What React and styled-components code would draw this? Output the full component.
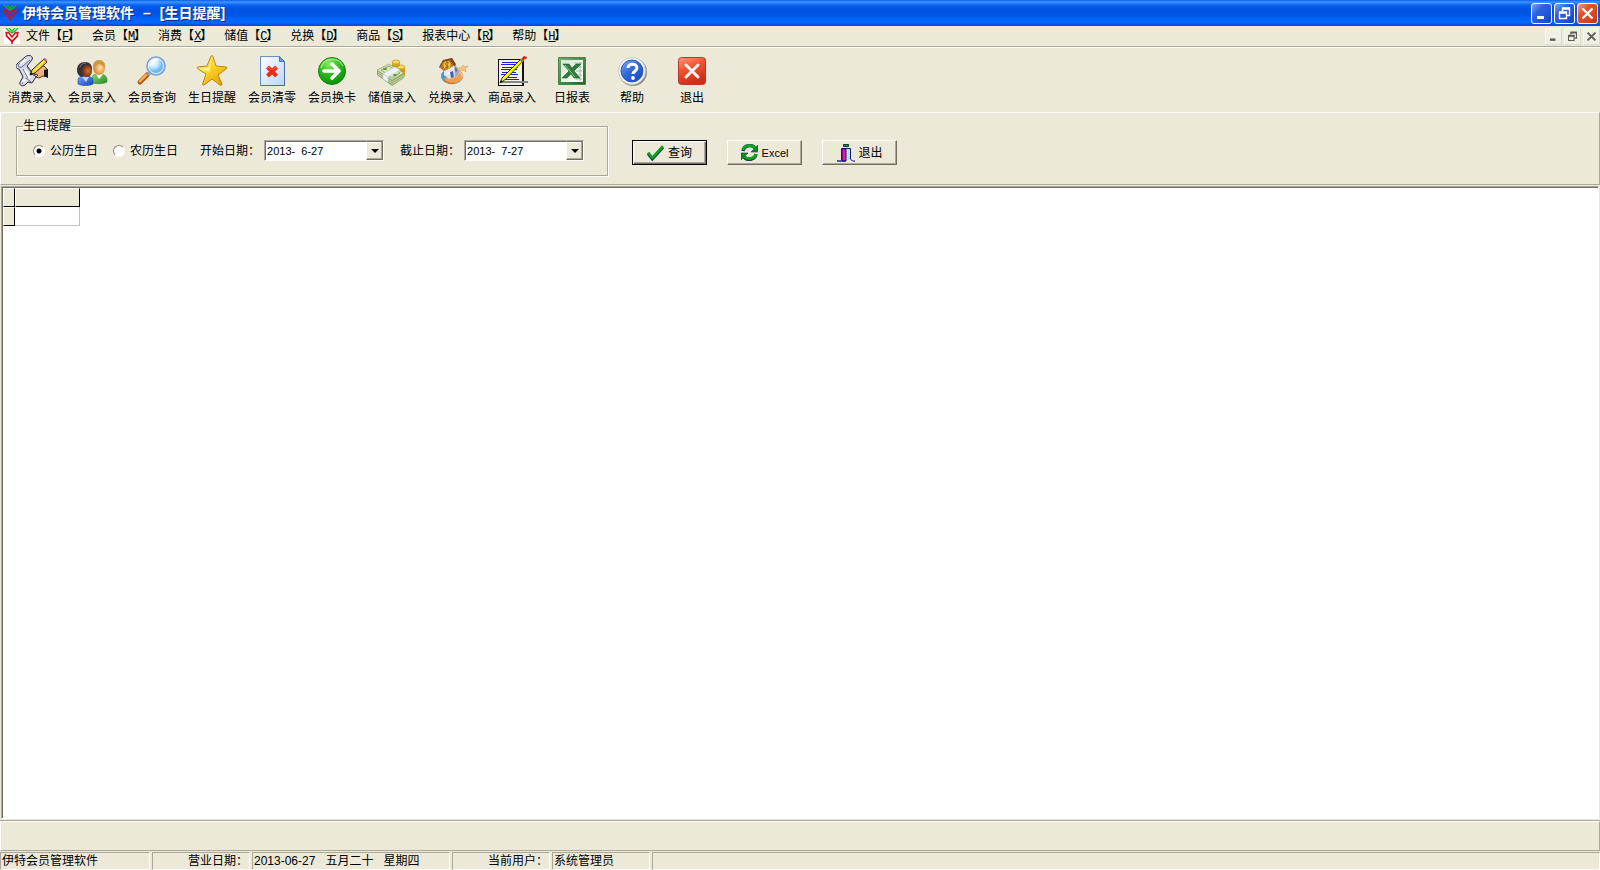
import React, { useState } from 'react';
import styled, { createGlobalStyle } from 'styled-components';

const FACE = '#ECE9D8';
const SHADOW = '#ACA899';
const DARK = '#716F64';

const GlobalStyle = createGlobalStyle`
    * {
        box-sizing: border-box;
    }

    body {
        margin: 0;
        background: ${FACE};
    }

    body, button, input {
        font-family: "Liberation Sans", "Noto Sans CJK SC", sans-serif;
        font-size: 12px;
        line-height: 16px;
        color: #000;
    }
`;

const AppWrapper = styled.div`
    display: flex;
    flex-direction: column;
    min-height: 100vh;
    background: ${FACE};
`;

const TitleBar = styled.header`
    display: flex;
    align-items: center;
    height: 26px;
    padding: 0 2px;
    background: linear-gradient(
        #0A5FE8 0px, #3D95FF 2px, #0B62EE 5px, #0054E3 9px,
        #0055E5 15px, #0066FF 20px, #0066FC 23px, #0043CF 26px
    );
`;

const Title = styled.h1`
    display: flex;
    gap: 9px;
    flex: auto;
    margin: 0;
    padding-left: 4px;
    font-size: 14px;
    line-height: 20px;
    font-weight: bold;
    color: #FFF;
    text-shadow: 1px 1px 0 #0A2A80;
`;

const WindowButtons = styled.div`
    display: flex;
    gap: 2px;
`;

const WindowButton = styled.button`
    width: 21px;
    height: 21px;
    padding: 0;
    border: 1px solid #FFF;
    border-radius: 3px;
    background: ${({ $close }) => ($close
        ? 'linear-gradient(135deg, #F0A088 0%, #E0502C 35%, #D8421C 75%, #B83010 100%)'
        : 'linear-gradient(135deg, #7FA4F0 0%, #2F62E0 35%, #1F50D8 75%, #1440B8 100%)')};

    svg {
        display: block;
    }
`;

const MenuBar = styled.nav`
    display: flex;
    align-items: center;
    height: 21px;
    padding-left: 4px;
    border-bottom: 1px solid ${SHADOW};
`;

const MenuIcon = styled.span`
    display: flex;
    width: 16px;
    height: 16px;
    background: #FFF;
`;

const MenuItem = styled.button`
    padding: 0 6px;
    border: 0;
    background: none;
    white-space: nowrap;
`;

const AccessKey = styled.u`
    display: inline-block;
    width: 6px;
    font-family: "Liberation Mono", monospace;
`;

const ChildButtons = styled.div`
    display: flex;
    gap: 2px;
    margin-left: auto;
`;

const ChildButton = styled.button`
    width: 17px;
    height: 17px;
    padding: 0;
    border: 1px solid #F8F6EE;
    border-right-color: #DEDACA;
    border-bottom-color: #DEDACA;
    background: #F1EFE4;

    svg {
        display: block;
    }
`;

const Toolbar = styled.div`
    display: flex;
    padding: 7px 2px 6px;
    border-top: 1px solid #FFF;
`;

const ToolButton = styled.button`
    display: flex;
    flex-direction: column;
    align-items: center;
    gap: 3px;
    width: 60px;
    padding: 0;
    border: 0;
    background: none;
    white-space: nowrap;
`;

const FilterPanel = styled.form`
    display: flex;
    align-items: flex-start;
    height: 73px;
    padding: 5px 0 0 15px;
    border: 1px solid #FFF;
    border-right-color: ${SHADOW};
    border-bottom-color: ${SHADOW};
`;

const Group = styled.fieldset`
    display: flex;
    align-items: center;
    margin: 0;
    padding: 6px 23px 14px 16px;
    border: 1px solid ${SHADOW};
    box-shadow: 1px 1px 0 #FFF, inset 1px 1px 0 #FFF;
`;

const Legend = styled.legend`
    margin-left: -10px;
    padding: 0;
`;

const RadioLabel = styled.label`
    display: flex;
    align-items: center;
    gap: 5px;
    margin-right: 15px;
`;

const Radio = styled.input`
    appearance: none;
    width: 12px;
    height: 12px;
    margin: 0;
    border: 1px solid;
    border-color: #8A8778 #FFF #FFF #8A8778;
    border-radius: 50%;
    background: #FFF;

    &:checked {
        background: radial-gradient(circle, #000 0 2px, #FFF 3px);
    }
`;

const FieldLabel = styled.label`
    width: 64px;
    margin-left: ${({ $first }) => ($first ? '7px' : '16px')};
    white-space: nowrap;
`;

const DateBox = styled.div`
    display: flex;
    width: 120px;
    height: 21px;
    border: 1px solid;
    border-color: ${SHADOW} #FFF #FFF ${SHADOW};
`;

const DateInput = styled.input`
    flex: auto;
    width: 0;
    padding: 0 0 0 1px;
    border: 1px solid ${DARK};
    border-width: 1px 0 0 1px;
    background: #FFF;
    font-size: 11px;
    outline: none;
`;

const DropButton = styled.button`
    flex: none;
    width: 17px;
    padding: 0;
    border: 1px solid;
    border-color: ${DARK} ${DARK} ${DARK} #FFF;
    background: ${FACE};
    box-shadow: inset -1px -1px 0 ${SHADOW}, inset 0 1px 0 #FFF;

    svg {
        display: block;
        margin: auto;
    }
`;

const Actions = styled.div`
    display: flex;
    gap: 20px;
    margin: 22px 0 0 24px;
`;

const ActionButton = styled.button`
    display: flex;
    align-items: center;
    justify-content: center;
    gap: 4px;
    width: 75px;
    height: 25px;
    padding: 0;
    border: 1px solid;
    border-color: ${({ $primary }) => ($primary ? '#000' : `#FFF ${DARK} ${DARK} #FFF`)};
    background: ${FACE};
    box-shadow: ${({ $primary }) => ($primary
        ? `inset 1px 1px 0 #FFF, inset -1px -1px 0 ${DARK}, inset -2px -2px 0 ${SHADOW}`
        : `inset -1px -1px 0 ${SHADOW}`)};
`;

const ActionText = styled.span`
    font-size: ${({ $small }) => ($small ? '11px' : '12px')};
`;

const GridArea = styled.main`
    flex: auto;
    margin: 1px 1px 2px;
    border: 1px solid;
    border-color: ${SHADOW} #FFF #FFF ${SHADOW};
    box-shadow: inset 1px 1px 0 ${DARK};
    background: #FFF;
    padding: 1px;
`;

const Table = styled.table`
    border-collapse: separate;
    border-spacing: 0;
`;

const FixedCell = styled.th`
    width: ${({ $wide }) => ($wide ? '65px' : '12px')};
    height: 19px;
    padding: 0;
    border: 1px solid;
    border-color: #FFF #000 #000 #FFF;
    background: ${FACE};
`;

const DataCell = styled.td`
    padding: 0;
    border: 1px solid #C0C0C0;
    border-width: 0 1px 1px 0;
`;

const BottomPanel = styled.div`
    height: 30px;
    border: 1px solid #FFF;
    border-right-color: ${SHADOW};
    border-bottom-color: ${SHADOW};
    box-shadow: 0 -1px 0 ${SHADOW};
`;

const StatusBar = styled.footer`
    display: flex;
    gap: 2px;
    height: 19px;
    padding-top: 1px;
`;

const StatusPanel = styled.div`
    flex: ${({ $width }) => ($width ? `0 0 ${$width}px` : '1 1 0')};
    padding: 0 1px;
    border: 1px solid;
    border-color: ${SHADOW} #FFF #FFF ${SHADOW};
    text-align: ${({ $align }) => $align || 'left'};
    white-space: pre;
    overflow: hidden;
`;

const Icon = ({ children, size = 32, box = size }) => (
    <svg width={size} height={size} viewBox={`0 0 ${box} ${box}`} fill='none' aria-hidden='true'>
        {children}
    </svg>
);

const Logo = () => (
    <Icon size={16}>
        <path d='M2 0l3 3 3 2 3-2 3-3M5 0l3 3 3-3' stroke='#12B81E' strokeWidth='1.300' />
        <path d='M2.500 4v4L8 13.500 13.500 8V4' stroke='#D8101C' strokeWidth='1.800' />
        <path d='M1.500 4.500h3L8 9l3.500-4.500h3M8 12v4' stroke='#D8101C' strokeWidth='1.600' />
    </Icon>
);

const ScrollIcon = () => (
    <Icon>
        <path d='M9 2c2-2 6-2 7 0 1 1 0 3-1 4l-4 5 9 11-4 6-4-1-3 3c-3 2-6 0-5-3l3-5-4-8c-3 0-4-3-2-5z' fill='#D9D9EC' stroke='#2A2A3C' />
        <path d='M10 3L3 9c-2 2 0 4 3 3l8-7M7 14l5 9M6 29l4-6 5 4M11 12l7 9' stroke='#68687C' />
        <path d='M10 4L4 9M9 15l5 8M7 27l3-3' stroke='#FFF' strokeWidth='2' />
        <path d='M19 16l5-5h4l4 4v7l-5-1-4 2-3-1 2-2-4-1z' fill='#EDB184' stroke='#55301C' />
        <path d='M28 15l4-1v9l-4-2z' fill='#171720' />
        <path d='M14 20l2-5L28 4l3 3-12 11z' fill='#F8D51D' stroke='#262210' />
        <path d='M27 4l2-1 2 2-1 2z' fill='#D44B92' />
        <path d='M17 16L28 6' stroke='#FFF2A0' />
        <path d='M14 20l1-3 2 2z' fill='#111' />
    </Icon>
);

const MembersIcon = () => (
    <Icon>
        <defs>
            <radialGradient id='darkFace' cx='.6' cy='.5'><stop stopColor='#D0732C' /><stop offset='1' stopColor='#7A330D' /></radialGradient>
            <radialGradient id='lightFace' cx='.6' cy='.5'><stop stopColor='#FFE0A8' /><stop offset='1' stopColor='#D98E3A' /></radialGradient>
            <linearGradient id='blueCoat' x2='1' y2='1'><stop stopColor='#78A6FA' /><stop offset='1' stopColor='#1740B8' /></linearGradient>
            <linearGradient id='greenCoat' x2='1' y2='1'><stop stopColor='#8CDB72' /><stop offset='1' stopColor='#238A24' /></linearGradient>
        </defs>
        <path d='M16 28v-5c0-3 3-4 7-4 5 0 8 2 8 6v2c-3 2-10 2-15 1z' fill='url(#greenCoat)' stroke='#2C8C2C' strokeWidth='.6' />
        <path d='M20 19l3 5 4-5z' fill='#FFF' />
        <ellipse cx='23' cy='13' rx='6' ry='7' fill='url(#lightFace)' />
        <path d='M17 12c0-4 2-7 6-7s7 3 6 8c-2-2-3-4-6-4-2 0-3 2-6 3z' fill='#CB9740' />
        <path d='M2 29v-4c0-3 3-4 7-4s8 1 8 5v3c-4 2-11 2-15 0z' fill='url(#blueCoat)' stroke='#1B46B4' strokeWidth='.6' />
        <path d='M6 22l4 5 3-5z' fill='#B8D2FF' />
        <path d='M1 15c0-5 3-8 8-8s7 3 7 7l-4 6-7 2c-3-2-4-4-4-7z' fill='#35333B' />
        <ellipse cx='11' cy='16' rx='5' ry='6' fill='url(#darkFace)' />
        <path d='M4 12c1-3 3-4 6-4' stroke='#77747D' />
    </Icon>
);

const SearchIcon = () => (
    <Icon>
        <defs>
            <radialGradient id='lens' cx='.35' cy='.3'><stop stopColor='#FFF' /><stop offset='.55' stopColor='#C3EBFF' /><stop offset='1' stopColor='#6FB8F2' /></radialGradient>
        </defs>
        <path d='M11 20l-7 7' stroke='#A55B16' strokeWidth='5' strokeLinecap='round' />
        <path d='M10 20l-6 6' stroke='#F7A64E' strokeWidth='3' strokeLinecap='round' />
        <path d='M12 20l3-3' stroke='#8CA2BC' strokeWidth='3' />
        <circle cx='20' cy='11' r='9' fill='url(#lens)' stroke='#7E9EDB' strokeWidth='1.600' />
        <circle cx='20' cy='11' r='7.600' stroke='#E9F7FF' />
        <path d='M15 10c1-3 3-5 6-5' stroke='#FFF' strokeWidth='2' strokeLinecap='round' />
    </Icon>
);

const StarIcon = () => (
    <Icon>
        <defs>
            <linearGradient id='gold' x2='.8' y2='1'><stop stopColor='#FFF9B0' /><stop offset='.5' stopColor='#FFD92E' /><stop offset='1' stopColor='#E09A00' /></linearGradient>
        </defs>
        <path d='M15 1c1-1 2 0 2 1l3 9 10 1c1 0 1 1 0 2l-8 6 4 9c0 1-1 2-2 1l-8-6-8 6c-1 0-2 0-1-2l3-9-8-5c-1-1-1-2 0-2l9-1z' fill='url(#gold)' stroke='#B98512' />
        <path d='M16 4l-3 9-9 1 9 2' fill='#FFFBD0' fillOpacity='.7' />
        <path d='M16 4v12l6 12-6-6-7 6 7-12 12-3' stroke='#F4B818' strokeWidth='.7' />
    </Icon>
);

const ClearIcon = () => (
    <Icon>
        <defs>
            <linearGradient id='sheet' x2='1' y2='1'><stop stopColor='#FFF' /><stop offset='1' stopColor='#B9D5FA' /></linearGradient>
        </defs>
        <path d='M4.500 1.500h19l5 5v24h-24z' fill='url(#sheet)' stroke='#6B8CCB' />
        <path d='M23.500 1.500v5h5z' fill='#6C9AE0' stroke='#4C74BC' />
        <path d='M28.500 7v23.500h-24' stroke='#4C6CA8' />
        <path d='M11.500 12l9 9M20.500 12l-9 9' stroke='#EE2A12' strokeWidth='4' />
        <path d='M12 12l3 3M20 12l-3 3' stroke='#FF7858' />
    </Icon>
);

const SwapIcon = () => (
    <Icon>
        <defs>
            <radialGradient id='green' cx='.4' cy='.25' r='.8'><stop stopColor='#8CEB60' /><stop offset='.5' stopColor='#2FB81C' /><stop offset='1' stopColor='#078A06' /></radialGradient>
        </defs>
        <circle cx='16' cy='16' r='13.500' fill='url(#green)' stroke='#128412' />
        <path d='M5 13c2-9 16-13 22-2' stroke='#C8FAA8' strokeOpacity='.6' strokeWidth='1.500' />
        <path d='M8 16h14M16 9l7 7-7 7' stroke='#FFF' strokeWidth='3.600' strokeLinecap='round' strokeLinejoin='round' />
    </Icon>
);

const MoneyIcon = () => (
    <Icon>
        <path d='M16 7v9c1 2 7 2 8 0V7z' fill='#D9AD25' />
        <path d='M21 12v9c1 2 7 2 8 0v-9z' fill='#D3A31B' />
        <ellipse cx='20' cy='7' rx='4' ry='2' fill='#F6DA62' stroke='#B98D15' strokeWidth='.6' />
        <ellipse cx='25' cy='12' rx='4' ry='2' fill='#F6DA62' stroke='#B98D15' strokeWidth='.6' />
        <path d='M16 10c2 2 6 2 8 0M21 15c2 2 6 2 8 0M21 18c2 2 6 2 8 0' stroke='#A47C10' strokeWidth='.7' />
        <path d='M1 15v5l15 11v-6zM16 25v6l12-8v-5z' fill='#8FA86A' />
        <path d='M1 15l12-6 15 9-12 7z' fill='#D7E3B8' stroke='#89A75C' strokeWidth='.7' />
        <path d='M2 17l14 10 12-7M2 19l14 10 12-7' stroke='#DBE5BE' strokeWidth='.7' />
        <path d='M5 15l8-4 11 7-8 5z' stroke='#7F9E5C' strokeWidth='.8' />
        <path d='M7 19v5l5 3v-5zM7 19l12-7 5 3-12 7z' fill='#EDF2F8' stroke='#C4CED8' strokeWidth='.5' />
        <ellipse cx='19' cy='20' rx='2' ry='1' fill='#66903F' />
        <ellipse cx='9' cy='14' rx='2' ry='1' fill='#66903F' />
    </Icon>
);

const ExchangeIcon = () => (
    <Icon>
        <path d='M5 21c0-4 4-7 10-7 8 0 12 3 12 7 0 5-5 8-11 8S5 26 5 21z' fill='#4D9CC8' />
        <path d='M17 28c-5 0-8-1-10-4 4-2 7-1 10-3l5-6c3 1 5 3 5 6 0 4-4 7-10 7z' fill='#F2A050' />
        <path d='M8 24c2 4 7 5 11 4' stroke='#D47628' strokeWidth='1.500' />
        <path d='M22 16c4 2 4 4 4 6' stroke='#FFD08C' strokeWidth='1.200' />
        <path d='M8 14l10-5 6 6-2 6-9 3-5-4z' fill='#E4E4EC' />
        <path d='M18 9l6 6-2 6-3 1z' fill='#A8A8BA' />
        <path d='M10 16l6-3M11 19l6-3' stroke='#FFF' strokeWidth='1.500' />
        <path d='M14 17l3-1 1 6-3 1z' fill='#3F64B4' />
        <path d='M19 12l2 2v3l-2-1z' fill='#667098' />
        <path d='M4 13l3-7 9-3 4 6-7 5-5 2z' fill='#B87430' />
        <path d='M3 12l4-7 9-2 4 7-2 1-4-6-7 2-3 6z' fill='#7C431C' />
        <ellipse cx='11' cy='10' rx='3.500' ry='4' fill='#EFC72A' />
        <path d='M13 8c-2-1-4 0-3 2 0 1 3 0 2 2 0 1-2 1-3 0M11 6v8' stroke='#84500A' strokeWidth='.8' />
        <path d='M21 13h4l2-3 1 2 4-1-3 3 1 3-3-2-4 1z' fill='#F3C98A' stroke='#D9974A' strokeWidth='.6' />
    </Icon>
);

const GoodsIcon = () => (
    <Icon>
        <path d='M2 4h26v27H2z' fill='#111' />
        <path d='M3 5h23v25H3z' fill='#F4F2E6' />
        <path d='M6 7.500h16M5 9.500h17M6 12.500h16M5 14.500h16M6 17.500h14M5 19.500h17M6 22.500h15M7 24.500h16' stroke='#1722C8' />
        <path d='M5 27h27' stroke='#858585' strokeWidth='2' />
        <path d='M4 28l2-5L25 4l3 1L10 24z' fill='#FFEF19' stroke='#171400' strokeWidth='.8' />
        <path d='M24 5l2-2 2 2-2 3z' fill='#8C8434' />
        <path d='M26 3l2-2 3 1-1 2-3 1z' fill='#F01818' />
        <path d='M4 28l1-3 2 2z' fill='#000' />
    </Icon>
);

const ExcelIcon = () => (
    <Icon>
        <defs>
            <linearGradient id='frame' x2='1' y2='1'><stop stopColor='#7BAA78' /><stop offset='1' stopColor='#1E6425' /></linearGradient>
            <linearGradient id='paper' x2='1' y2='1'><stop stopColor='#D4E8D0' /><stop offset='1' stopColor='#FFF' /></linearGradient>
        </defs>
        <path d='M2.500 2.500h27v27h-27z' fill='url(#frame)' stroke='#4A824C' />
        <path d='M5 5h22v22H5z' fill='url(#paper)' />
        <path d='M18 8h8M20 12h6M20 16h6M19 20h7M20 24h6M24 7v19' stroke='#9BC29B' />
        <path d='M7 9h6l3 4 4-4h5l-7 7 6 7h-6l-3-4-4 4H6l7-7z' fill='#2F7C3B' stroke='#1E5A2C' strokeWidth='.6' />
        <path d='M9 10l10 12' stroke='#92C693' />
    </Icon>
);

const HelpIcon = () => (
    <Icon>
        <defs>
            <linearGradient id='blue' x2='.8' y2='1'><stop stopColor='#89B2F5' /><stop offset='.5' stopColor='#316BDA' /><stop offset='1' stopColor='#174DC2' /></linearGradient>
        </defs>
        <circle cx='17' cy='17' r='14' fill='#8C8C88' />
        <circle cx='16' cy='16' r='13.500' fill='#F8F9FC' stroke='#C2C6CF' />
        <circle cx='16' cy='16' r='11' fill='url(#blue)' stroke='#2856AA' />
        <path d='M12 13c0-5 9-5 9 0 0 3-4 3-4 6' stroke='#FFF' strokeWidth='3' />
        <circle cx='17' cy='23' r='1.900' fill='#FFF' />
    </Icon>
);

const QuitIcon = () => (
    <Icon>
        <defs>
            <linearGradient id='red' x2='.4' y2='1'><stop stopColor='#FF9B78' /><stop offset='.45' stopColor='#EF5435' /><stop offset='1' stopColor='#CF2D17' /></linearGradient>
        </defs>
        <rect x='2.500' y='2.500' width='27' height='27' rx='3' fill='url(#red)' stroke='#B63A26' />
        <path d='M10 10l12 12M22 10L10 22' stroke='#FFF4EC' strokeWidth='3' strokeLinecap='round' />
    </Icon>
);

const CheckIcon = () => (
    <Icon size={17} box={16}>
        <path d='M1 9l4 5L15 3' stroke='#103C60' strokeWidth='3' />
        <path d='M1 8l4 5L15 2' stroke='#0BA317' strokeWidth='2.400' />
    </Icon>
);

const RefreshIcon = () => (
    <Icon size={17}>
        <path d='M2 7c1-6 9-7 12-3M15 10c-1 6-9 7-12 3' stroke='#0C3A62' strokeWidth='3.400' />
        <path d='M2 6c1-5 9-6 12-2M15 10c-1 5-9 6-12 2' stroke='#10A51A' strokeWidth='2.800' />
        <path d='M17 1v7h-7zM0 16V9h7z' fill='#098D13' stroke='#0B4A42' strokeWidth='.6' />
    </Icon>
);

const DoorIcon = () => (
    <Icon size={18}>
        <path d='M6.500 .500h5v2h-5z' fill='#20A050' stroke='#053518' />
        <path d='M4.500 16V4.500h9V15l2 2h3' stroke='#11117C' />
        <path d='M5 5h4v12H5z' fill='#D51BB6' stroke='#35104C' />
        <path d='M10 5h3v11h-3z' fill='#8DEBF2' />
        <path d='M0 17h9' stroke='#101B94' strokeWidth='1.400' />
        <path d='M10.500 6v9M12.500 7v9' stroke='#FFF' strokeDasharray='1 1' />
    </Icon>
);

const MinimizeGlyph = ({ size, color }) => (
    <Icon size={size} box={19}><path d='M5 13.500h7' stroke={color} strokeWidth='3' /></Icon>
);

const RestoreGlyph = ({ size, color }) => (
    <Icon size={size} box={19}>
        <path d='M7.500 7V4.500h7v7H12' stroke={color} strokeWidth='1.400' />
        <path d='M7 4.500h8M4 8.500h8' stroke={color} strokeWidth='2.400' />
        <path d='M4.500 8.500h7v6h-7z' stroke={color} strokeWidth='1.400' />
    </Icon>
);

const CloseGlyph = ({ size, color }) => (
    <Icon size={size} box={19}><path d='M4.500 4.500l10 10M14.500 4.500l-10 10' stroke={color} strokeWidth='2.400' /></Icon>
);

const MENUS = [
    ['文件', 'F'],
    ['会员', 'M'],
    ['消费', 'X'],
    ['储值', 'C'],
    ['兑换', 'D'],
    ['商品', 'S'],
    ['报表中心', 'R'],
    ['帮助', 'H']
];

const TOOLS = [
    ['消费录入', ScrollIcon],
    ['会员录入', MembersIcon],
    ['会员查询', SearchIcon],
    ['生日提醒', StarIcon],
    ['会员清零', ClearIcon],
    ['会员换卡', SwapIcon],
    ['储值录入', MoneyIcon],
    ['兑换录入', ExchangeIcon],
    ['商品录入', GoodsIcon],
    ['日报表', ExcelIcon],
    ['帮助', HelpIcon],
    ['退出', QuitIcon]
];

const DateField = ({ id, label, value, first }) => (
    <>
        <FieldLabel htmlFor={id} $first={first}>{label}</FieldLabel>
        <DateBox>
            <DateInput id={id} type='text' defaultValue={value} />
            <DropButton type='button' aria-label={label}>
                <svg width='8' height='4' viewBox='0 0 8 4'><path d='M0 0h8L4 4z' fill='#000' /></svg>
            </DropButton>
        </DateBox>
    </>
);

const App = () => {
    const [calendar, setCalendar] = useState('solar');

    return (
        <AppWrapper>
            <GlobalStyle />
            <TitleBar>
                <Logo />
                <Title>
                    <span>伊特会员管理软件</span>
                    <span>–</span>
                    <span>[生日提醒]</span>
                </Title>
                <WindowButtons>
                    <WindowButton aria-label='最小化'><MinimizeGlyph size={19} color='#FFF' /></WindowButton>
                    <WindowButton aria-label='还原'><RestoreGlyph size={19} color='#FFF' /></WindowButton>
                    <WindowButton aria-label='关闭' $close><CloseGlyph size={19} color='#FFF' /></WindowButton>
                </WindowButtons>
            </TitleBar>

            <MenuBar>
                <MenuIcon><Logo /></MenuIcon>
                {MENUS.map(([name, key]) => (
                    <MenuItem key={key}>{name}【<AccessKey>{key}</AccessKey>】</MenuItem>
                ))}
                <ChildButtons>
                    <ChildButton aria-label='最小化'><MinimizeGlyph size={15} color='#5E5C52' /></ChildButton>
                    <ChildButton aria-label='还原'><RestoreGlyph size={15} color='#5E5C52' /></ChildButton>
                    <ChildButton aria-label='关闭'><CloseGlyph size={15} color='#5E5C52' /></ChildButton>
                </ChildButtons>
            </MenuBar>

            <Toolbar>
                {TOOLS.map(([name, ToolIcon]) => (
                    <ToolButton key={name}>
                        <ToolIcon />
                        <span>{name}</span>
                    </ToolButton>
                ))}
            </Toolbar>

            <FilterPanel onSubmit={(e) => e.preventDefault()}>
                <Group>
                    <Legend>生日提醒</Legend>
                    <RadioLabel>
                        <Radio type='radio' name='calendar' checked={calendar === 'solar'} onChange={() => setCalendar('solar')} />
                        公历生日
                    </RadioLabel>
                    <RadioLabel>
                        <Radio type='radio' name='calendar' checked={calendar === 'lunar'} onChange={() => setCalendar('lunar')} />
                        农历生日
                    </RadioLabel>
                    <DateField id='start' label='开始日期：' value='2013-  6-27' first />
                    <DateField id='end' label='截止日期：' value='2013-  7-27' />
                </Group>
                <Actions>
                    <ActionButton type='submit' $primary><CheckIcon /><ActionText>查询</ActionText></ActionButton>
                    <ActionButton type='button'><RefreshIcon /><ActionText $small>Excel</ActionText></ActionButton>
                    <ActionButton type='button'><DoorIcon /><ActionText>退出</ActionText></ActionButton>
                </Actions>
            </FilterPanel>

            <GridArea>
                <Table>
                    <thead>
                        <tr>
                            <FixedCell />
                            <FixedCell $wide />
                        </tr>
                    </thead>
                    <tbody>
                        <tr>
                            <FixedCell />
                            <DataCell />
                        </tr>
                    </tbody>
                </Table>
            </GridArea>

            <BottomPanel />

            <StatusBar>
                <StatusPanel $width={150}>伊特会员管理软件</StatusPanel>
                <StatusPanel $width={98} $align='right'>营业日期：</StatusPanel>
                <StatusPanel $width={198}>{'2013-06-27   五月二十   星期四'}</StatusPanel>
                <StatusPanel $width={98} $align='right'>当前用户：</StatusPanel>
                <StatusPanel $width={98}>系统管理员</StatusPanel>
                <StatusPanel />
            </StatusBar>
        </AppWrapper>
    );
};

export default App;
